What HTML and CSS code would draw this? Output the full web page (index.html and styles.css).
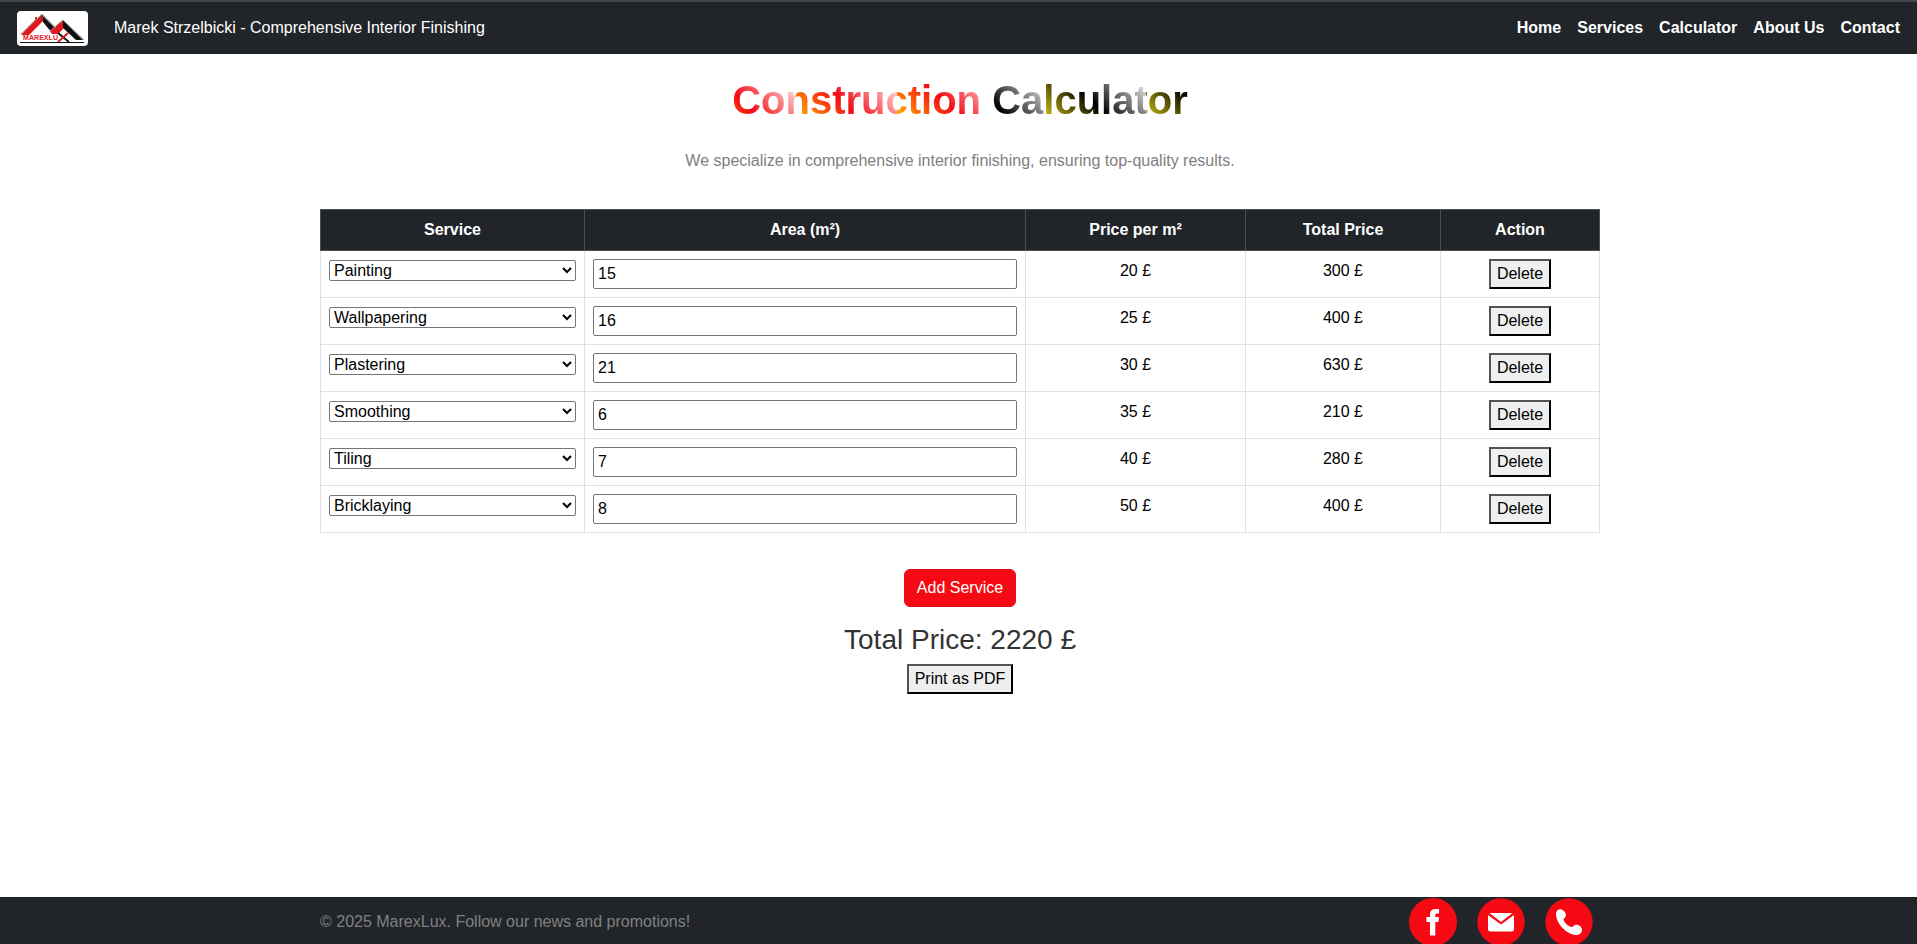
FILE: index.html
```html
<!DOCTYPE html>
<html lang="en">
<head>
<meta charset="utf-8">
<title>Construction Calculator</title>
<link rel="stylesheet" href="styles.css">
</head>
<body>
<header class="navbar">
  <svg class="logo" viewBox="0 0 71 35" width="71" height="35" aria-label="MarexLux">
    <rect width="71" height="35" rx="4" fill="#fff"/>
    <path d="M4 24L18 9V6h2v2l5-5 1 7-14 14z" fill="#e2171e"/>
    <path d="M25 4l14 14-4 4-9-11z" fill="#111"/>
    <path d="M33 20l13-11v9l-5 5h-6z" fill="#e2171e"/>
    <path d="M46 9l20 20h-7L46 17z" fill="#111"/>
    <path d="M4 23L25 3l14 14M33 20L46 9l21 20" fill="none" stroke="#999" stroke-width="1"/>
    <text class="logo-text" x="6" y="29" textLength="35">MAREXLU</text>
    <path d="M41 22l11 9" stroke="#111" stroke-width="2"/>
    <path d="M51 22l-10 9" stroke="#e2171e" stroke-width="2"/>
    <path d="M3 31.500h64" stroke="#111" stroke-width="1"/>
  </svg>
  <span class="brand">Marek Strzelbicki - Comprehensive Interior Finishing</span>
  <nav class="links">
    <a>Home</a><a>Services</a><a>Calculator</a><a>About Us</a><a>Contact</a>
  </nav>
</header>
<main class="content">
  <h1 class="title"><span class="warm">Construction</span> <span class="dark">Calculator</span></h1>
  <p class="lead">We specialize in comprehensive interior finishing, ensuring top-quality results.</p>
  <table class="services">
    <colgroup><col class="c1"><col class="c2"><col class="c3"><col class="c4"><col class="c5"></colgroup>
    <thead><tr><th>Service</th><th>Area (m²)</th><th>Price per m²</th><th>Total Price</th><th>Action</th></tr></thead>
    <tbody>
      <tr><td><select><option>Painting</option></select></td><td><input value="15"></td><td>20 £</td><td>300 £</td><td><button class="plain">Delete</button></td></tr>
      <tr><td><select><option>Wallpapering</option></select></td><td><input value="16"></td><td>25 £</td><td>400 £</td><td><button class="plain">Delete</button></td></tr>
      <tr><td><select><option>Plastering</option></select></td><td><input value="21"></td><td>30 £</td><td>630 £</td><td><button class="plain">Delete</button></td></tr>
      <tr><td><select><option>Smoothing</option></select></td><td><input value="6"></td><td>35 £</td><td>210 £</td><td><button class="plain">Delete</button></td></tr>
      <tr><td><select><option>Tiling</option></select></td><td><input value="7"></td><td>40 £</td><td>280 £</td><td><button class="plain">Delete</button></td></tr>
      <tr><td><select><option>Bricklaying</option></select></td><td><input value="8"></td><td>50 £</td><td>400 £</td><td><button class="plain">Delete</button></td></tr>
    </tbody>
  </table>
  <button class="add">Add Service</button>
  <h3 class="total">Total Price: 2220 £</h3>
  <button class="plain">Print as PDF</button>
</main>
<footer class="footer">
  <p class="copy">© 2025 MarexLux. Follow our news and promotions!</p>
  <div class="social">
    <svg viewBox="0 0 48 48" width="48" height="48"><circle cx="24" cy="24" r="24" fill="#f50a14"/><path d="M21 37.500V24h-3.500v-5H21v-2c0-4 2-6 5.500-6H30v4.500h-2c-1.300 0-1.700.5-1.700 1.800V19H30l-.5 5h-3.200v13.500z" fill="#fff"/></svg>
    <svg viewBox="0 0 48 48" width="48" height="48"><circle cx="24" cy="24" r="23.700" fill="#f50a14"/><path d="M12.500 15h23L24 24z" fill="#fff"/><path d="M11 17l13 9.500L37 17v14a2.500 2.500 0 0 1-2.500 2.500h-21A2.500 2.500 0 0 1 11 31z" fill="#fff"/></svg>
    <svg viewBox="0 0 48 48" width="48" height="48"><circle cx="24" cy="24" r="23.700" fill="#f50a14"/><path d="M11 15.500c0-2.500 3-5 5.500-4 3 1.200 5.500 4.500 4 7.500-.7 1.300-2 1.500-2 2.500.5 3 5.500 7.500 8.500 7.500 1 0 1.500-1.500 3-2 3-.8 6.500 1.500 7 4.500.3 3-2.500 5.500-5.500 5.500C23 37 11 27 11 15.500z" fill="#fff"/></svg>
  </div>
</footer>
</body>
</html>
```
FILE: styles.css
```css
* { box-sizing: border-box; }
body {
  margin: 0;
  height: 944px;
  overflow: hidden;
  display: flex;
  flex-direction: column;
  font: 16px/24px "Liberation Sans", Arial, sans-serif;
  color: #212529;
  background: #fff;
}
.navbar {
  flex: none;
  height: 54px;
  padding: 2px 17px 0 17px;
  border-top: 2px solid #42464a;
  background: #212529;
  color: #fff;
  display: flex;
  align-items: center;
}
.logo { margin-bottom: 1px; }
.logo-text { font: bold 7px "Liberation Sans", Arial, sans-serif; fill: #e2171e; }
.brand { margin-left: 26px; margin-bottom: 2px; }
.links { margin-left: auto; margin-bottom: 2px; display: flex; gap: 16px; font-weight: 700; }
.content {
  width: 1280px;
  margin-left: 320px;
  flex: 1;
  padding-top: 22px;
  display: flex;
  flex-direction: column;
  align-items: center;
}
.title { margin: 0; font-size: 40px; line-height: 48px; font-weight: 700; }
.warm, .dark { -webkit-background-clip: text; background-clip: text; color: transparent; background-size: 101px 100%; }
.warm { background-image: linear-gradient(45deg, #ffc400 0, #f50a14 47%, #fff 100%); background-position: 64px 0; }
.dark { background-image: linear-gradient(45deg, #e0d010 0, #000 47%, #fff 100%); background-position: 53px 0; }
.lead { margin: 25px 0 36px; color: #808080; }
.services { width: 1280px; table-layout: fixed; border-collapse: collapse; text-align: center; color: #000; }
.c1 { width: 264px; }
.c2 { width: 441px; }
.c3 { width: 220px; }
.c4 { width: 195px; }
.services th { padding: 8px; border: 1px solid #4d5154; background: #212529; color: #fff; }
.services td { padding: 8px; border: 1px solid #dee2e6; vertical-align: top; height: 47px; }
select, input, button { font: inherit; color: #000; }
select { display: block; width: 100%; height: 21px; margin-top: 1px; line-height: normal; background: #fff; border: 1px solid #767676; border-radius: 2px; }
input { display: block; width: 100%; height: 30px; padding: 1px 4px; border: 1px solid #767676; border-radius: 2px; }
.plain { display: block; height: 30px; margin: 0 auto; padding: 1px 6px; border: 2px outset #000; border-radius: 0; background: #efefef; }
.add { margin-top: 36px; height: 38px; padding: 6px 12px; border: 1px solid #dc1420; border-radius: 6px; background: #f50a14; color: #fff; }
.total { margin: 16px 0 7px; font-size: 28px; line-height: 33.6px; font-weight: 400; color: #333; }
.footer { flex: none; height: 47px; padding: 0 324px 0 320px; background: #212529; display: flex; justify-content: space-between; }
.copy { margin: 13px 0 0; color: #808080; }
.social { display: flex; gap: 20px; margin-top: 1px; }
```
